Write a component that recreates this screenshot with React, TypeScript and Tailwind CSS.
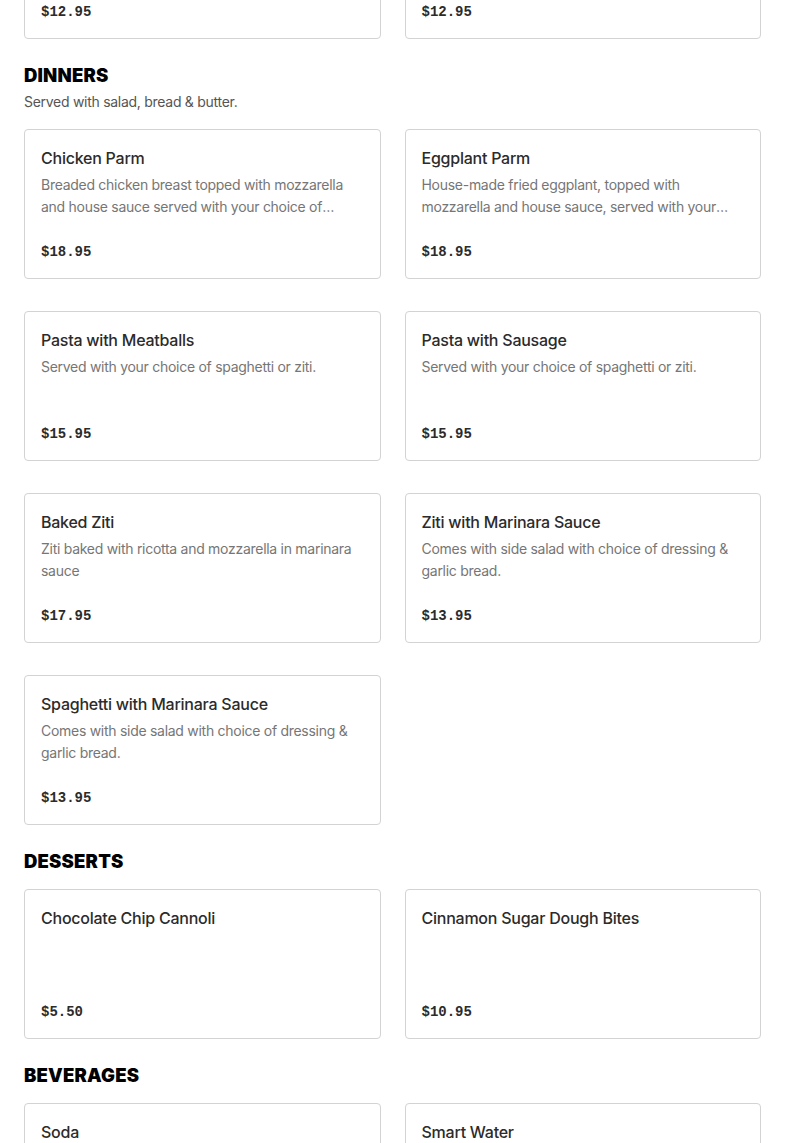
import React from "react";

type Item = { name: string; desc?: string; price: string };

function Card({ item }: { item: Item }) {
  return (
    <div className="flex h-[150px] flex-col rounded-[4px] border border-[#d3d3d3] bg-white px-4 pt-4 pb-[15px]">
      <div className="text-[16px] leading-6 font-medium tracking-[-0.015em] text-[#2b2b2b]">{item.name}</div>
      {item.desc && (
        <div className="mt-1 line-clamp-2 text-[14px] leading-[22px] tracking-[-0.02em] text-[#767676]">{item.desc}</div>
      )}
      <div className="mt-auto font-['Liberation_Mono',monospace] text-[14px] leading-[22px] font-bold text-[#2b2b2b]">
        {item.price}
      </div>
    </div>
  );
}

function Section({ title, sub, items }: { title: string; sub?: string; items: Item[] }) {
  return (
    <section className="mt-6">
      <h2 className="text-[18.5px] leading-6 font-black tracking-[0.01em] text-black">{title}</h2>
      {sub && <p className="mt-1 text-[14px] leading-[22px] tracking-[-0.02em] text-[#555555]">{sub}</p>}
      <div className="mt-4 grid grid-cols-2 gap-x-6 gap-y-8">
        {items.map((it) => (
          <Card key={it.name} item={it} />
        ))}
      </div>
    </section>
  );
}

export default function App() {
  const dinners: Item[] = [
    {
      name: "Chicken Parm",
      desc: "Breaded chicken breast topped with mozzarella and house sauce served with your choice of spaghetti or ziti.",
      price: "$18.95",
    },
    {
      name: "Eggplant Parm",
      desc: "House-made fried eggplant, topped with mozzarella and house sauce, served with your choice of spaghetti or ziti.",
      price: "$18.95",
    },
    { name: "Pasta with Meatballs", desc: "Served with your choice of spaghetti or ziti.", price: "$15.95" },
    { name: "Pasta with Sausage", desc: "Served with your choice of spaghetti or ziti.", price: "$15.95" },
    { name: "Baked Ziti", desc: "Ziti baked with ricotta and mozzarella in marinara sauce", price: "$17.95" },
    {
      name: "Ziti with Marinara Sauce",
      desc: "Comes with side salad with choice of dressing & garlic bread.",
      price: "$13.95",
    },
    {
      name: "Spaghetti with Marinara Sauce",
      desc: "Comes with side salad with choice of dressing & garlic bread.",
      price: "$13.95",
    },
  ];
  const desserts: Item[] = [
    { name: "Chocolate Chip Cannoli", price: "$5.50" },
    { name: "Cinnamon Sugar Dough Bites", price: "$10.95" },
  ];
  const beverages: Item[] = [
    { name: "Soda", price: "$2.50" },
    { name: "Smart Water", price: "$3.50" },
  ];
  return (
    <div className="h-[1143px] overflow-hidden bg-white font-['Inter',sans-serif]">
      <div className="px-6 pb-10">
        <div className="-mt-[111px] grid grid-cols-2 gap-x-6">
          <Card item={{ name: "Garden Salad", desc: "Fresh greens", price: "$12.95" }} />
          <Card item={{ name: "Caesar Salad", desc: "Romaine", price: "$12.95" }} />
        </div>
        <Section title="DINNERS" sub="Served with salad, bread & butter." items={dinners} />
        <Section title="DESSERTS" items={desserts} />
        <Section title="BEVERAGES" items={beverages} />
      </div>
    </div>
  );
}
